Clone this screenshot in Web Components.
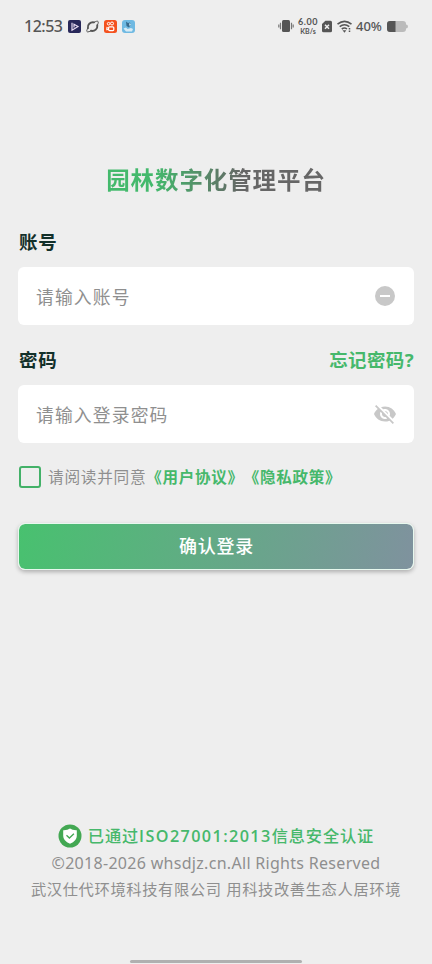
<!DOCTYPE html>
<html lang="zh-CN">
<head>
<meta charset="utf-8">
<title>园林数字化管理平台</title>
<style>
html,body{margin:0;height:100%;background:#eee}
body{font-family:"Noto Sans","Noto Sans CJK SC",sans-serif;overflow:hidden}
</style>
</head>
<body>
<login-page></login-page>
<script>
const define = (name, html) => {
  const t = document.createElement('template');
  t.innerHTML = html;
  customElements.define(name, class extends HTMLElement {
    constructor() {
      super();
      this.attachShadow({mode: 'open'}).appendChild(t.content.cloneNode(true));
    }
  });
};

define('status-bar', `
<style>
:host{display:flex;align-items:center;justify-content:space-between;height:52px;padding:0 24px;box-sizing:border-box;color:#555}
div{display:flex;align-items:center}
.time{font:500 16px/20px "Noto Sans";letter-spacing:-.5px;width:44px;white-space:nowrap}
.l svg{margin-right:5px}
.rate{font:700 9px/10px Lato,sans-serif;display:flex;flex-direction:column;align-items:center;width:22px;white-space:nowrap;margin:0 3px 0 3px}
.rate span{display:block}
.rate span+span{font-size:7px;line-height:8px}
.rate span:first-child{letter-spacing:.500px}
.pct{font:500 13px/20px "Noto Sans";width:27px;margin:0 4px;white-space:nowrap}
svg{display:block;flex:none}
</style>
<div class="l">
<span class="time">12:53</span>
<svg width="13" height="13" viewBox="0 0 13 13"><rect width="13" height="13" rx="2" fill="#28285a"/><path d="M4 2.800v7.400L10 6.500 6 4.200v3.300" fill="none" stroke="#e8dcf2" stroke-width="1.200"/></svg>
<svg width="13" height="13" viewBox="0 0 13 13"><g fill="none" stroke="#555" stroke-linecap="round"><path d="M1.900 8.200C1.200 4.500 4.300 1.800 8 2.400" stroke-width="1.900"/><path d="M11.300 5.300C11.800 8.800 8.800 11.500 5 10.800" stroke-width="1.900"/><path d="M8 2.400C10.500.8 12.300.8 12.300 2.200q0 1.200-1 3.100M1.900 8.200C.5 10.300.4 11.600 1.500 11.900q1.200.2 3.500-1.100" stroke-width="1"/></g></svg>
<svg width="13" height="13" viewBox="0 0 13 13"><rect width="13" height="13" rx="2.500" fill="#f4511e"/><g fill="none" stroke="#fff"><circle cx="4.600" cy="3.700" r="1.300"/><circle cx="8" cy="3.500" r="1.500"/><rect x="4.600" y="6.800" width="5.200" height="3.800" rx="1" stroke-width="1.200"/><path d="M2.800 7.300v2.800l1.800-1.300z"/></g></svg>
<svg width="13" height="13" viewBox="0 0 13 13"><rect width="13" height="13" rx="3" fill="#6fb9e2"/><path d="M1.500 8.500 4 7.500 5.500 9l3.500-1 2 1-1 2.500H4z" fill="#d8ebf5"/><path d="M4 1.500 6 3 8 2.500 8.500 5 7 7.500 4.500 6z" fill="#386a8d"/><path d="m7 3 2 1.500L7.500 6z" fill="#cce8f5"/></svg>
</div>
<div>
<svg width="16" height="14" viewBox="0 0 16 14"><rect x="4" y="1" width="8" height="12" rx="1.500" fill="#555"/><path d="M2.500 3.800v6.400M13.500 3.800v6.400M.8 5.500v3M15.200 5.500v3" stroke="#777" stroke-width="1.200"/></svg>
<span class="rate"><span>6.00</span><span>KB/s</span></span>
<svg width="10" height="13" viewBox="0 0 10 13"><path d="M3.400.8H8.500Q10 .8 10 2.300v8.400q0 1.500-1.500 1.500h-7Q0 12.200 0 10.700V4z" fill="#555"/><path d="m3 4.700 4 4m0-4-4 4" stroke="#eee" stroke-width="1.500"/></svg>
<svg style="margin-left:5px" width="15" height="13" viewBox="0 0 15 13"><g fill="none" stroke="#555" stroke-width="1.600"><path d="M.5 4.200Q7.500-1.500 14.500 4.200M2.700 6.700Q7.500 2.800 12.300 6.700M4.800 9Q7.500 7 10 9"/></g><path d="M5.500 10.200h3.800L7.500 12.700z" fill="#555"/><path d="M12.500 8v4" stroke="#555" stroke-width="1.500" stroke-dasharray="1.500 .9"/></svg>
<span class="pct">40%</span>
<svg width="21" height="11" viewBox="0 0 21 11"><rect width="19" height="11" rx="3" fill="#bbb"/><path d="M3 0h5.500v11H3Q0 11 0 8V3Q0 0 3 0z" fill="#555"/><path d="M19 3.500q2 0 2 2t-2 2z" fill="#bbb"/></svg>
</div>`);

define('field-box', `
<style>
:host{display:flex;align-items:center;justify-content:space-between;height:58px;padding:0 18px;background:#fff;border-radius:6px;box-sizing:border-box;font-size:17.800px;letter-spacing:1.150px;color:#8f8f8f;white-space:nowrap}
::slotted(svg){display:block;flex:none}
</style><slot></slot><slot name="icon"></slot>`);

define('field-head', `
<style>
:host{display:flex;align-items:center;justify-content:space-between;height:26px;padding-left:1px;font-size:18.500px;font-weight:700;letter-spacing:.700px;color:#13302a;white-space:nowrap}
::slotted(span){color:#46b86b;letter-spacing:.400px}
</style><slot></slot><slot name="link"></slot>`);

define('agree-row', `
<style>
:host{display:flex;align-items:center;height:24px;padding-left:1px;font-size:15.700px;letter-spacing:.700px;color:#8f8f8f;white-space:nowrap}
i{box-sizing:border-box;width:22px;height:22px;border:2px solid #43b168;border-radius:3px;margin-right:7px;flex:none}
span,b{position:relative;top:-1px}
b{font-weight:600;color:#46b86b;font-size:15.500px;letter-spacing:.750px;text-spacing-trim:space-all}
</style><i></i><span>请阅读并同意</span><b>《用户协议》《隐私政策》</b>`);

define('primary-button', `
<style>
:host{display:flex;align-items:center;justify-content:center;height:47px;padding:0 0 3px 1px;box-sizing:border-box;border:1px solid #e7f8ee;border-radius:7px;background:linear-gradient(100deg,#48c16f,#7f929e);background-clip:padding-box;box-shadow:0 2px 4px #0004;color:#fff;font-size:18px;font-weight:500;letter-spacing:.700px}
</style><slot></slot>`);

define('page-footer', `
<style>
:host{display:flex;flex-direction:column;align-items:center;font-size:15.300px;color:#8f8f8f;white-space:nowrap}
div{height:26px;line-height:26px}
.iso{display:flex;align-items:center;color:#46b86b;font-size:16.200px;font-weight:500;letter-spacing:.900px;height:27px;margin-bottom:1px}
.iso svg{margin-right:6px}
.iso b{font-family:"Open Sans","Noto Sans",sans-serif;font-weight:600;letter-spacing:1.400px}
.copy{font-size:16px;letter-spacing:.300px}
.co{letter-spacing:.600px}
</style>
<div class="iso"><svg width="24" height="24" viewBox="0 0 24 24"><circle cx="12" cy="12" r="11.500" fill="#43a853"/><path d="M12 4.500Q14.500 6.500 18.800 6.300V12q0 5-6.800 7.700Q5.200 17 5.200 12V6.300Q9.500 6.500 12 4.500z" fill="#fff"/><path d="m8.500 11.300 2.900 2.700 4.500-4.300" fill="none" stroke="#43a853" stroke-width="1.300"/></svg><span>已通过<b>ISO27001:2013</b>信息安全认证</span></div>
<div class="copy">©2018-2026 whsdjz.cn.All Rights Reserved</div>
<div class="co">武汉仕代环境科技有限公司 用科技改善生态人居环境</div>`);

define('login-page', `
<style>
:host{display:flex;flex-direction:column;height:964px;width:432px;background:#eee}
main{display:flex;flex-direction:column;padding:0 18px;flex:1}
h1{margin:110px auto 0;font-size:23.500px;line-height:36px;font-weight:700;letter-spacing:.900px;background:linear-gradient(90deg,#43b96c 0%,#43b96c 22%,#666 62%);-webkit-background-clip:text;background-clip:text;color:transparent;white-space:nowrap}
.a{margin-top:30px}
.b{margin-top:21px}
field-box{margin-top:13px}
agree-row{margin-top:22px}
primary-button{margin-top:34px}
page-footer{margin-bottom:58px}
.home{width:172px;height:3px;background:#b0b0b0;border-radius:2px;margin:0 auto 1px}
</style>
<status-bar></status-bar>
<main>
<h1>园林数字化管理平台</h1>
<field-head class="a">账号</field-head>
<field-box>请输入账号<svg slot="icon" width="22" height="22" viewBox="0 0 22 22"><circle cx="11" cy="11" r="10" fill="#c8c8c8"/><path d="M6 11h10" stroke="#fff" stroke-width="2"/></svg></field-box>
<field-head class="b">密码<span slot="link">忘记密码?</span></field-head>
<field-box>请输入登录密码<svg slot="icon" width="22" height="22" viewBox="1 1 22 22"><path fill="#c8c8c8" d="M12 7c2.760 0 5 2.240 5 5 0 .650-.130 1.260-.360 1.830l2.920 2.920c1.510-1.260 2.700-2.890 3.430-4.750-1.730-4.390-6-7.500-11-7.500-1.400 0-2.740.250-3.980.700l2.160 2.160C10.740 7.130 11.350 7 12 7zM2 4.270l2.280 2.280.46.460C3.080 8.300 1.780 10.020 1 12c1.730 4.390 6 7.500 11 7.500 1.550 0 3.030-.3 4.380-.84l.42.42L19.730 22 21 20.730 3.270 3 2 4.270zM7.530 9.800l1.550 1.550c-.05.210-.08.430-.08.650 0 1.660 1.340 3 3 3 .22 0 .44-.03.65-.08l1.550 1.550c-.67.330-1.410.530-2.200.530-2.760 0-5-2.240-5-5 0-.79.200-1.530.530-2.200zm4.310-.78l3.150 3.150.02-.16c0-1.660-1.340-3-3-3l-.17.010z"/></svg></field-box>
<agree-row></agree-row>
<primary-button>确认登录</primary-button>
</main>
<page-footer></page-footer>
<div class="home"></div>`);
</script>
</body>
</html>
